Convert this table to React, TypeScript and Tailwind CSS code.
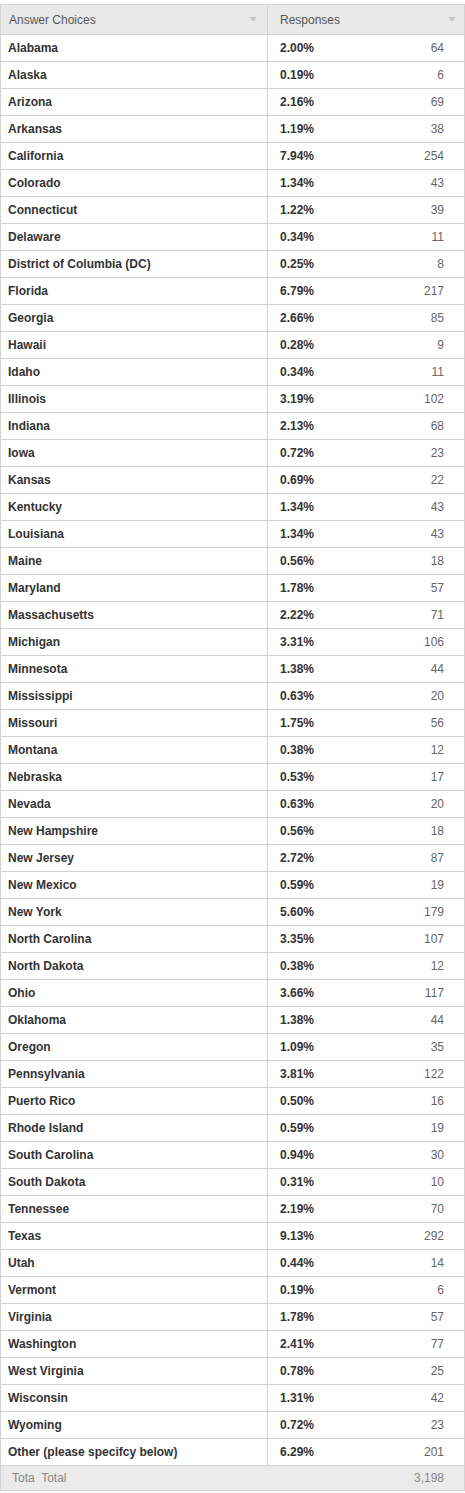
import React from "react";

const rows: [string, string, string][] = [
  ["Alabama", "2.00%", "64"],
  ["Alaska", "0.19%", "6"],
  ["Arizona", "2.16%", "69"],
  ["Arkansas", "1.19%", "38"],
  ["California", "7.94%", "254"],
  ["Colorado", "1.34%", "43"],
  ["Connecticut", "1.22%", "39"],
  ["Delaware", "0.34%", "11"],
  ["District of Columbia (DC)", "0.25%", "8"],
  ["Florida", "6.79%", "217"],
  ["Georgia", "2.66%", "85"],
  ["Hawaii", "0.28%", "9"],
  ["Idaho", "0.34%", "11"],
  ["Illinois", "3.19%", "102"],
  ["Indiana", "2.13%", "68"],
  ["Iowa", "0.72%", "23"],
  ["Kansas", "0.69%", "22"],
  ["Kentucky", "1.34%", "43"],
  ["Louisiana", "1.34%", "43"],
  ["Maine", "0.56%", "18"],
  ["Maryland", "1.78%", "57"],
  ["Massachusetts", "2.22%", "71"],
  ["Michigan", "3.31%", "106"],
  ["Minnesota", "1.38%", "44"],
  ["Mississippi", "0.63%", "20"],
  ["Missouri", "1.75%", "56"],
  ["Montana", "0.38%", "12"],
  ["Nebraska", "0.53%", "17"],
  ["Nevada", "0.63%", "20"],
  ["New Hampshire", "0.56%", "18"],
  ["New Jersey", "2.72%", "87"],
  ["New Mexico", "0.59%", "19"],
  ["New York", "5.60%", "179"],
  ["North Carolina", "3.35%", "107"],
  ["North Dakota", "0.38%", "12"],
  ["Ohio", "3.66%", "117"],
  ["Oklahoma", "1.38%", "44"],
  ["Oregon", "1.09%", "35"],
  ["Pennsylvania", "3.81%", "122"],
  ["Puerto Rico", "0.50%", "16"],
  ["Rhode Island", "0.59%", "19"],
  ["South Carolina", "0.94%", "30"],
  ["South Dakota", "0.31%", "10"],
  ["Tennessee", "2.19%", "70"],
  ["Texas", "9.13%", "292"],
  ["Utah", "0.44%", "14"],
  ["Vermont", "0.19%", "6"],
  ["Virginia", "1.78%", "57"],
  ["Washington", "2.41%", "77"],
  ["West Virginia", "0.78%", "25"],
  ["Wisconsin", "1.31%", "42"],
  ["Wyoming", "0.72%", "23"],
  ["Other (please specifcy below)", "6.29%", "201"],
];

const SortArrow = () => (
  <svg width="8" height="5" viewBox="0 0 8 5" className="shrink-0">
    <path d="M0 0 H8 L4 4.5 Z" fill="#c4c4c4" />
  </svg>
);

export default function App() {
  return (
    <div className="bg-white pt-[4px] font-['Liberation_Sans',Arial,sans-serif] text-[12px]">
      <div className="border-x border-t border-[#d3d3d3]">
        {/* header */}
        <div className="grid grid-cols-[267px_1fr] h-[30px] bg-[#e9e9e9] border-b border-[#d3d3d3] text-[#555]">
          <div className="flex items-center justify-between pl-[8px] pr-[10px] border-r border-[#d3d3d3]">
            <span>Answer Choices</span>
            <SortArrow />
          </div>
          <div className="flex items-center justify-between pl-[12px] pr-[8px]">
            <span>Responses</span>
            <SortArrow />
          </div>
        </div>

        {rows.map(([name, pct, count]) => (
          <div
            key={name}
            className="grid grid-cols-[267px_1fr] h-[27px] border-b border-[#d3d3d3]"
          >
            <div className="flex items-center pl-[7px] border-r border-[#d3d3d3] font-bold text-[#333]">
              {name}
            </div>
            <div className="flex items-center justify-between pl-[12px] pr-[20px]">
              <span className="font-bold text-[#333]">{pct}</span>
              <span className="text-[#666]">{count}</span>
            </div>
          </div>
        ))}

        {/* total */}
        <div className="flex items-center justify-between h-[25px] bg-[#ebebeb] border-b border-[#d3d3d3] pl-[11px] pr-[20px] text-[#888]">
          <span>Tota&nbsp; Total</span>
          <span>3,198</span>
        </div>
      </div>
    </div>
  );
}
